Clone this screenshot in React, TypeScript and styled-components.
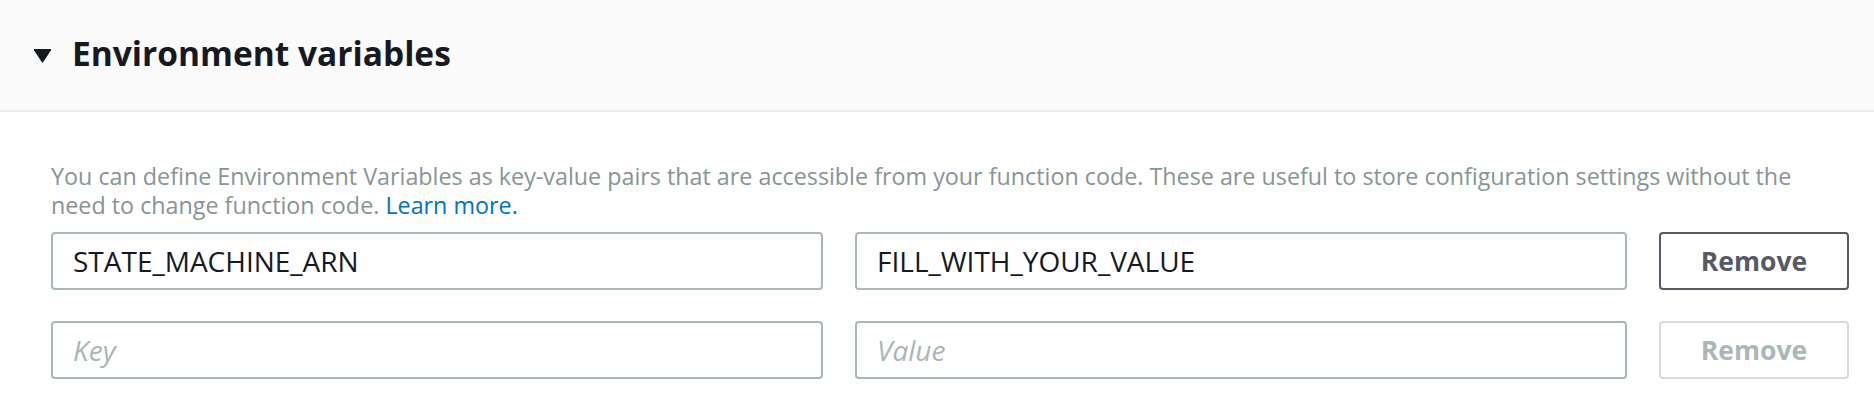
import React from 'react';
import styled, { createGlobalStyle } from 'styled-components';

const FONT = '"Open Sans", "Liberation Sans", Arial, sans-serif';

const GlobalStyle = createGlobalStyle`
  html, body {
    margin: 0;
    padding: 0;
    background: #ffffff;
  }
  body {
    font-family: ${FONT};
    color: #16191f;
  }
`;

const Panel = styled.section`
  display: flex;
  flex-direction: column;
  width: 100%;
`;

const PanelHeader = styled.div`
  display: flex;
  align-items: center;
  gap: 20px;
  height: 110px;
  padding-left: 33px;
  background: #fafafa;
  border-bottom: 2px solid #eaeded;
  box-sizing: content-box;
`;

const Caret = styled.svg`
  width: 19px;
  height: 15px;
  flex-shrink: 0;
`;

const Title = styled.h2`
  margin: 0 0 5px;
  font-size: 33.5px;
  font-weight: 700;
  color: #16191f;
`;

const PanelBody = styled.div`
  display: flex;
  flex-direction: column;
  gap: 12px;
  padding: 50px 25px 27px 51px;
`;

const Description = styled.p`
  margin: 0;
  max-width: 1765px;
  font-size: 23.3px;
  line-height: 29px;
  color: #879596;
`;

const Link = styled.a`
  display: inline-block;
  line-height: 29px;
  color: #0073bb;
  text-decoration: none;
`;

const VarGrid = styled.div`
  display: grid;
  grid-template-columns: 1fr 1fr 190px;
  column-gap: 32px;
  row-gap: 31px;
`;

const TextField = styled.input`
  box-sizing: border-box;
  height: 58px;
  width: 100%;
  padding: 0 20px;
  border: 2px solid #aab7b8;
  border-radius: 4px;
  background: #ffffff;
  font-family: ${FONT};
  font-size: 28px;
  color: #16191f;
  outline: none;

  &::placeholder {
    color: #aab7b8;
    font-style: italic;
  }
`;

const RemoveButton = styled.button<{ $disabled?: boolean }>`
  box-sizing: border-box;
  height: 58px;
  width: 100%;
  padding: 0;
  border: 2px solid ${({ $disabled }) => ($disabled ? '#d5dbdb' : '#545b64')};
  border-radius: 4px;
  background: #ffffff;
  font-family: ${FONT};
  font-size: 26.5px;
  font-weight: 700;
  color: ${({ $disabled }) => ($disabled ? '#aab7b8' : '#545b64')};
  cursor: ${({ $disabled }) => ($disabled ? 'default' : 'pointer')};
`;

type EnvVar = { key: string; value: string };

const vars: EnvVar[] = [
  { key: 'STATE_MACHINE_ARN', value: 'FILL_WITH_YOUR_VALUE' },
  { key: '', value: '' },
];

export default function App() {
  return (
    <>
      <GlobalStyle />
      <Panel>
        <PanelHeader>
          <Caret viewBox="0 0 19 15">
            <path d="M1.5 1 H17.5 Q18.8 1 18 2.3 L10.3 14 Q9.5 15 8.7 14 L1 2.3 Q0.2 1 1.5 1 Z" fill="#16191f" />
          </Caret>
          <Title>Environment variables</Title>
        </PanelHeader>
        <PanelBody>
          <Description>
            You can define Environment Variables as key-value pairs that are accessible from your function code. These
            are useful to store configuration settings without the need to change function code.{' '}
            <Link href="#">Learn more.</Link>
          </Description>
          <VarGrid>
            {vars.map((v, i) => {
              const empty = !v.key && !v.value;
              return (
                <React.Fragment key={i}>
                  <TextField defaultValue={v.key} placeholder="Key" />
                  <TextField defaultValue={v.value} placeholder="Value" />
                  <RemoveButton $disabled={empty} disabled={empty}>
                    Remove
                  </RemoveButton>
                </React.Fragment>
              );
            })}
          </VarGrid>
        </PanelBody>
      </Panel>
    </>
  );
}
